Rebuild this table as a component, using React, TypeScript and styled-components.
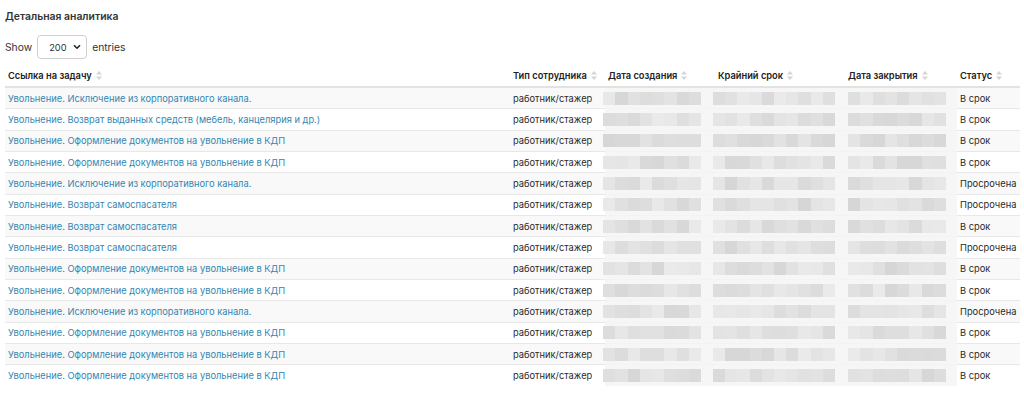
import styled, { createGlobalStyle } from "styled-components";

const GlobalStyle = createGlobalStyle`
  body {
    margin: 0;
    background: #fff;
    font-family: Inter, "Noto Sans", Arial, sans-serif;
    color: #222;
  }
`;

const Page = styled.div`
  padding: 8px 5px 0 5px;
`;

const Title = styled.h3`
  margin: 0;
  font-size: 10.4px;
  line-height: 18px;
  font-weight: 600;
  color: #333;
`;

const Controls = styled.div`
  margin-top: 9px;
  display: flex;
  align-items: center;
  gap: 5px;
  font-size: 10.3px;
  color: #333;
`;

const SelectBox = styled.div`
  position: relative;
  width: 50px;
  height: 24px;
`;

const Select = styled.select`
  appearance: none;
  width: 100%;
  height: 100%;
  border: 1px solid #d0d0d0;
  border-radius: 4px;
  background: #fff;
  padding: 0 0 0 11px;
  font-family: Inter, Arial, sans-serif;
  font-size: 9.3px;
  color: #333;
`;

const Chevron = styled.svg`
  position: absolute;
  right: 6px;
  top: 9px;
  pointer-events: none;
`;

const Table = styled.table`
  margin-top: 6px;
  width: 1015px;
  border-collapse: collapse;
  table-layout: fixed;
  font-size: 9.3px;
`;

const Th = styled.th<{ $w?: number }>`
  box-sizing: border-box;
  width: ${(p) => (p.$w ? `${p.$w}px` : "auto")};
  height: 22px;
  padding: 0 3px;
  text-align: left;
  font-weight: 600;
  color: #222;
  white-space: nowrap;
  border-bottom: 2px solid #e2e2e2;
`;

const SortIcon = styled.svg`
  margin-left: 4px;
  vertical-align: -1px;
`;

const Row = styled.tr<{ $odd: boolean }>`
  background: ${(p) => (p.$odd ? "#f9f9f9" : "#fff")};
`;

const Td = styled.td`
  height: 20.33px;
  padding: 0 3px;
  white-space: nowrap;
  overflow: hidden;
  color: #2a2a2a;
  border-top: 1px solid #e8e8e8;
`;

const LinkCell = styled.a`
  color: #3586b1;
  text-decoration: none;
`;

const BlurCell = styled.td`
  height: 20.33px;
  padding: 0;
  background: #f6f6f6;
  border-top: 1px solid #f3f3f3;
`;

const Mosaic = styled.div<{ $w: number; $shift: number }>`
  display: flex;
  width: ${(p) => p.$w}px;
  height: 13px;
  margin-left: ${(p) => p.$shift}px;
`;

const Block = styled.div`
  flex: 1;
  height: 100%;
`;

const rows: [string, string][] = [
  ["Увольнение. Исключение из корпоративного канала.", "В срок"],
  ["Увольнение. Возврат выданных средств (мебель, канцелярия и др.)", "В срок"],
  ["Увольнение. Оформление документов на увольнение в КДП", "В срок"],
  ["Увольнение. Оформление документов на увольнение в КДП", "В срок"],
  ["Увольнение. Исключение из корпоративного канала.", "Просрочена"],
  ["Увольнение. Возврат самоспасателя", "Просрочена"],
  ["Увольнение. Возврат самоспасателя", "В срок"],
  ["Увольнение. Возврат самоспасателя", "Просрочена"],
  ["Увольнение. Оформление документов на увольнение в КДП", "В срок"],
  ["Увольнение. Оформление документов на увольнение в КДП", "В срок"],
  ["Увольнение. Исключение из корпоративного канала.", "Просрочена"],
  ["Увольнение. Оформление документов на увольнение в КДП", "В срок"],
  ["Увольнение. Оформление документов на увольнение в КДП", "В срок"],
  ["Увольнение. Оформление документов на увольнение в КДП", "В срок"],
];

// pseudo-random grey for the pixelated date cells
const shade = (seed: number) => {
  const x = Math.sin(seed * 12.9898) * 43758.5453;
  const r = x - Math.floor(x);
  const v = Math.round(214 + r * 20);
  return `rgb(${v},${v},${v + 1})`;
};

const blurCols = [
  { w: 98, shift: -2, n: 8 },
  { w: 122, shift: -2, n: 10 },
  { w: 98, shift: 3, n: 8 },
];

function Sort() {
  return (
    <SortIcon width="6" height="9" viewBox="0 0 6 9">
      <path d="M3 0 L6 3.5 L0 3.5 Z" fill="#d4d4d4" />
      <path d="M3 9 L6 5.5 L0 5.5 Z" fill="#d4d4d4" />
    </SortIcon>
  );
}

export default function App() {
  return (
    <Page>
      <GlobalStyle />
      <Title>Детальная аналитика</Title>
      <Controls>
        Show
        <SelectBox>
          <Select defaultValue="200">
            <option>10</option>
            <option>50</option>
            <option>200</option>
          </Select>
          <Chevron width="8" height="6" viewBox="0 0 8 6">
            <path d="M1 1.2 L4 4.2 L7 1.2" stroke="#222" strokeWidth="1.6" fill="none" />
          </Chevron>
        </SelectBox>
        entries
      </Controls>
      <Table>
        <thead>
          <tr>
            <Th $w={505}>Ссылка на задачу<Sort /></Th>
            <Th $w={95}>Тип сотрудника<Sort /></Th>
            <Th $w={110}>Дата создания<Sort /></Th>
            <Th $w={130}>Крайний срок<Sort /></Th>
            <Th $w={112}>Дата закрытия<Sort /></Th>
            <Th>Статус<Sort /></Th>
          </tr>
        </thead>
        <tbody>
          {rows.map(([task, status], i) => (
            <Row key={i} $odd={i % 2 === 0}>
              <Td>
                <LinkCell href="#">{task}</LinkCell>
              </Td>
              <Td>работник/стажер</Td>
              {blurCols.map((c, ci) => (
                <BlurCell key={ci}>
                  <Mosaic $w={c.w} $shift={c.shift}>
                    {Array.from({ length: c.n }).map((_, bi) => (
                      <Block key={bi} style={{ background: shade(i * 31 + ci * 7 + bi + 1) }} />
                    ))}
                  </Mosaic>
                </BlurCell>
              ))}
              <Td>{status}</Td>
            </Row>
          ))}
        </tbody>
      </Table>
    </Page>
  );
}
